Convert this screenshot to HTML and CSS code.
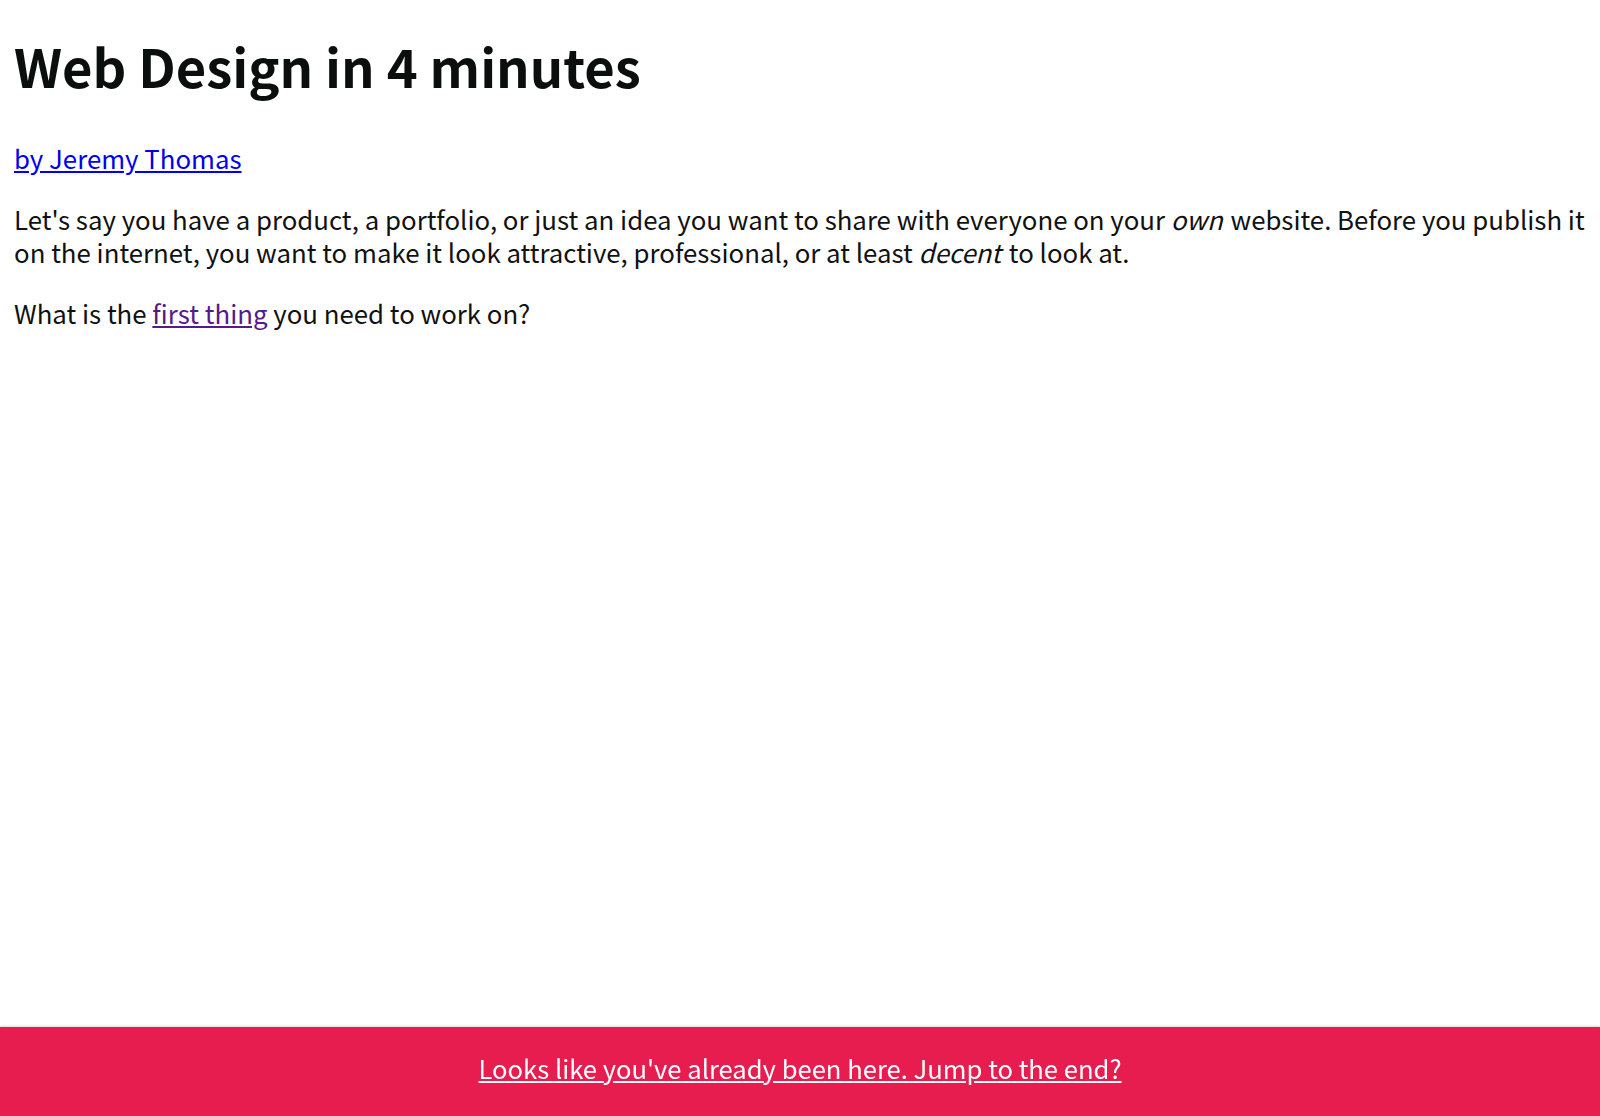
FILE: index.html
```html
<!DOCTYPE html>
<html>
<head>
<meta charset="utf-8">
<title>Web Design in 4 minutes</title>
<link rel="stylesheet" href="styles.css">
</head>
<body>
<main class="page">
  <h1 class="title">Web Design in 4 minutes</h1>
  <p class="byline"><a class="author" href="#">by Jeremy Thomas</a></p>
  <p class="text">Let's say you have a product, a portfolio, or just an idea you want to share with everyone on your <em class="emph">own</em> website. Before you publish it on the internet, you want to make it look attractive, professional, or at least <em class="emph">decent</em> to look at.</p>
  <p class="text">What is the <a class="visited" href="#">first thing</a> you need to work on?</p>
</main>
<div class="banner"><a class="banner-link" href="#">Looks like you've already been here. Jump to the end?</a></div>
</body>
</html>
```

FILE: styles.css
```css
html, body {
  margin: 0;
  padding: 0;
  background: #fff;
}
body {
  font-family: "Noto Sans CJK KR", "Noto Sans", sans-serif;
  color: #111;
  font-size: 25.8px;
  line-height: 33.7px;
}
.page {
  padding: 0 14px;
}
.title {
  font-size: 52.5px;
  font-weight: 700;
  line-height: 63px;
  margin: 0;
  padding-top: 34px;
  color: #0a0f0d;
}
.byline {
  margin: 44px 0 0;
}
.author {
  color: #0000ee;
}
.text {
  margin: 27px 0 0;
}
.emph {
  padding-right: 2px;
}
.visited {
  color: #551a8b;
}
.banner {
  position: fixed;
  left: 0;
  right: 0;
  bottom: 0;
  height: 89px;
  box-sizing: border-box;
  padding-bottom: 8px;
  background: #e81d4f;
  display: flex;
  align-items: center;
  justify-content: center;
  box-shadow: 0 -1px 2px rgba(0,0,0,0.15);
}
.banner-link {
  color: #fff;
  font-size: 25.6px;
}
```
